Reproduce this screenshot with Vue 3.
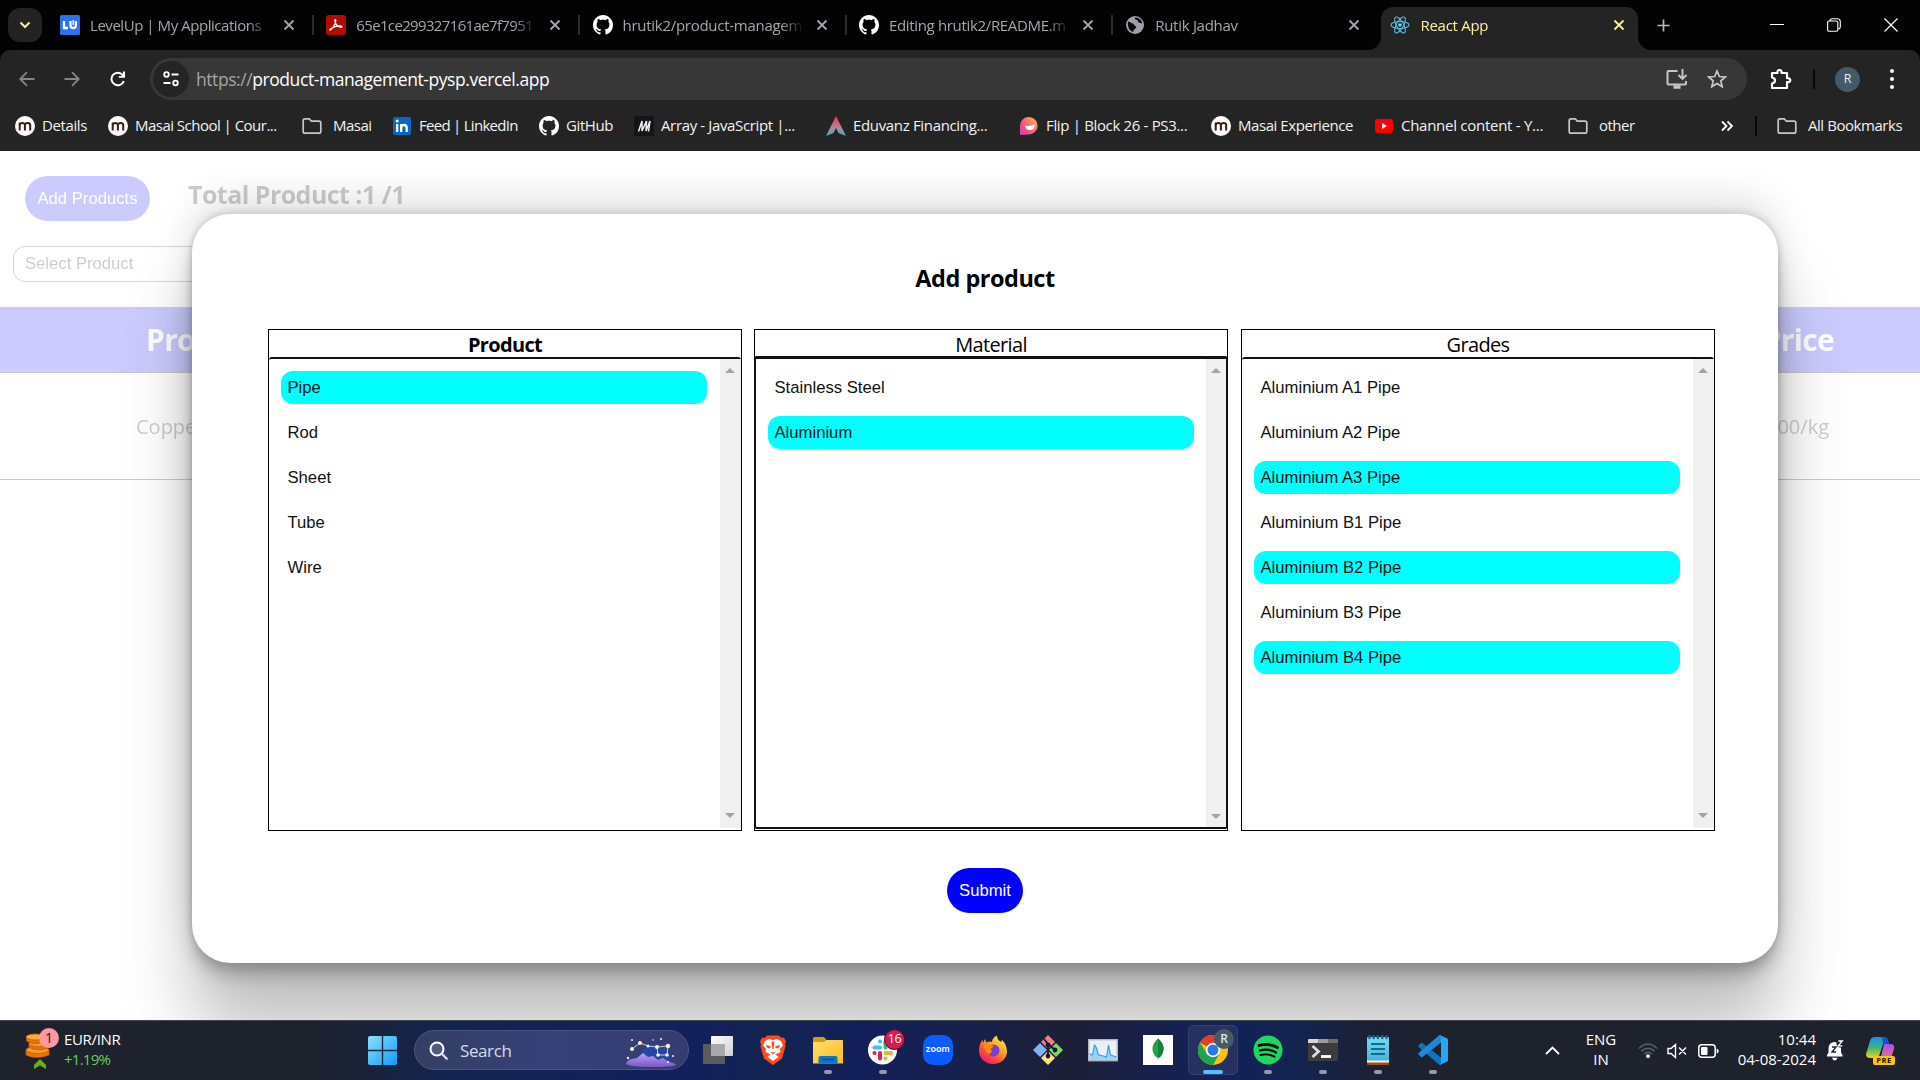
<script setup>
const tabs = [
  { icon: 'levelup', title: 'LevelUp | My Applications', tracking: -0.45 },
  { icon: 'pdf', title: '65e1ce299327161ae7f7951', tracking: -0.65 },
  { icon: 'github', title: 'hrutik2/product-managem', tracking: -0.28 },
  { icon: 'github', title: 'Editing hrutik2/README.m', tracking: -0.33 },
  { icon: 'globe', title: 'Rutik Jadhav', tracking: -0.28 },
]

const bookmarks = [
  { icon: 'masai', label: 'Details', width: 93, tracking: -0.4 },
  { icon: 'masai', label: 'Masai School | Cour...', width: 194, tracking: -0.52 },
  { icon: 'folder', label: 'Masai', width: 90, tracking: -0.5 },
  { icon: 'linkedin', label: 'Feed | LinkedIn', width: 147, tracking: -0.72 },
  { icon: 'github', label: 'GitHub', width: 95, tracking: -0.4 },
  { icon: 'mirror', label: 'Array - JavaScript |...', width: 192, tracking: -0.36 },
  { icon: 'eduvanz', label: 'Eduvanz Financing...', width: 193, tracking: -0.34 },
  { icon: 'flip', label: 'Flip | Block 26 - PS3...', width: 192, tracking: -0.34 },
  { icon: 'masai', label: 'Masai Experience', width: 163, tracking: -0.44 },
  { icon: 'youtube', label: 'Channel content - Y...', width: 194, tracking: -0.27 },
  { icon: 'folder', label: 'other', width: 90, tracking: -0.5 },
]

const columns = [
  {
    title: 'Product',
    bold: true,
    options: ['Pipe', 'Rod', 'Sheet', 'Tube', 'Wire'],
    selected: ['Pipe'],
  },
  {
    title: 'Material',
    focused: true,
    options: ['Stainless Steel', 'Aluminium'],
    selected: ['Aluminium'],
  },
  {
    title: 'Grades',
    options: [
      'Aluminium A1 Pipe',
      'Aluminium A2 Pipe',
      'Aluminium A3 Pipe',
      'Aluminium B1 Pipe',
      'Aluminium B2 Pipe',
      'Aluminium B3 Pipe',
      'Aluminium B4 Pipe',
    ],
    selected: ['Aluminium A3 Pipe', 'Aluminium B2 Pipe', 'Aluminium B4 Pipe'],
  },
]
</script>

<template>
  <div class="screen">
    <svg class="defs" width="0" height="0">
      <symbol id="i-levelup" viewBox="0 0 20 20">
        <rect width="20" height="20" rx="1.500" fill="#2b72f0" />
        <path d="M4 6v7h4M10.500 6v4.500q0 2.500 2.700 2.500t2.700-2.500V6" fill="none" stroke="#fff" stroke-width="2.300" />
        <path d="M13.200 5v5" stroke="#fff" stroke-width="1.300" />
      </symbol>
      <symbol id="i-pdf" viewBox="0 0 20 20">
        <rect width="20" height="20" rx="3" fill="#b30b00" />
        <path d="M4.200 15.200c2-1 5.400-6.200 5.600-9.600 0-1.700-1.300-1.300-.9.500.7 3 3.300 5.600 5.700 6.200 1.900.3 1.500-1.400-.4-1.400-2.700 0-6.200.9-8.600 2.300-1.500.9-2.200 1.800-1.400 2z" fill="none" stroke="#fff" stroke-width="1.200" />
      </symbol>
      <symbol id="i-github" viewBox="0 0 16 16">
        <path fill="#fff" d="M8 0C3.580 0 0 3.580 0 8c0 3.540 2.290 6.530 5.470 7.590.4.070.55-.17.55-.38 0-.19-.01-.82-.01-1.490-2.010.37-2.530-.49-2.690-.94-.09-.23-.48-.94-.82-1.130-.28-.15-.68-.52-.01-.53.63-.01 1.080.58 1.230.82.72 1.210 1.870.87 2.330.66.070-.52.28-.87.510-1.070-1.780-.2-3.640-.89-3.640-3.950 0-.87.310-1.590.82-2.150-.08-.2-.36-1.020.08-2.120 0 0 .67-.21 2.200.82.64-.18 1.320-.27 2-.27s1.360.09 2 .27c1.530-1.040 2.200-.82 2.200-.82.44 1.100.16 1.920.08 2.120.510.56.82 1.270.82 2.150 0 3.070-1.870 3.750-3.650 3.950.29.25.54.73.54 1.480 0 1.070-.01 1.930-.01 2.200 0 .21.150.46.550.38A8.010 8.010 0 0 0 16 8c0-4.420-3.580-8-8-8z" />
      </symbol>
      <symbol id="i-globe" viewBox="0 0 20 20">
        <circle cx="10" cy="10" r="9" fill="#9aa0a6" />
        <path d="M3 6.500c2 .2 2.500 1.500 4.200 1.700 2 .3 1.300 2 3 2.800 1.800.7.800 2.700-.8 3.200-1 .4-.6 2.800-1.900 2.600C4.500 15.500 2.300 12 3 6.500zM10 2.600c-.6 1.800.8 2.400 2.200 2.300 1 .2.300 2 1.600 2.700 1 .7 2.500.2 3.300 1.500C17 5.500 14.500 2.800 10 2.600z" fill="#0a0a0a" />
      </symbol>
      <symbol id="i-react" viewBox="0 0 20 20">
        <g fill="none" stroke="#53c1de" stroke-width="1.100">
          <ellipse cx="10" cy="10" rx="9" ry="3.500" />
          <ellipse cx="10" cy="10" rx="9" ry="3.500" transform="rotate(60 10 10)" />
          <ellipse cx="10" cy="10" rx="9" ry="3.500" transform="rotate(120 10 10)" />
        </g>
        <circle cx="10" cy="10" r="1.800" fill="#61dafb" />
      </symbol>
      <symbol id="i-masai" viewBox="0 0 20 20">
        <circle cx="10" cy="10" r="10" fill="#fff" />
        <path d="M4.700 14.500V6.500M4.700 9q.4-2 2.600-2t2.600 2v5.500M9.900 9q.4-2 2.700-2t2.600 2v5.500" fill="none" stroke="#3a1b16" stroke-width="2" />
      </symbol>
      <symbol id="i-folder" viewBox="0 0 20 20">
        <path d="M1.200 15.500V4.500q0-1.700 1.600-1.700h4.500l2 2.400h7.800q1.700 0 1.700 1.700v8.600q0 1.700-1.700 1.700H2.800q-1.600 0-1.600-1.700z" fill="none" stroke="#c7c7c7" stroke-width="1.700" />
      </symbol>
      <symbol id="i-linkedin" viewBox="0 0 20 20">
        <rect x="1" y="1" width="18" height="18" rx="1.500" fill="#0a66c2" />
        <path d="M5.200 8v8M9.200 16V8M9.200 11.500q.3-2.500 2.800-2.500 2.700 0 2.700 3v4" fill="none" stroke="#fff" stroke-width="2.300" />
        <circle cx="5.200" cy="5" r="1.500" fill="#fff" />
      </symbol>
      <symbol id="i-mirror" viewBox="0 0 20 20">
        <rect width="20" height="20" fill="#15141a" />
        <path d="M4.500 15.500L8 5v10L12.500 5l-.5 10L16 5l-1.500 10.500" fill="none" stroke="#eee" stroke-width="1.500" />
      </symbol>
      <symbol id="i-eduvanz" viewBox="0 0 20 20">
        <linearGradient id="g-edu" x2="0" y2="1"><stop offset=".1" stop-color="#ef3e5c" /><stop offset=".6" stop-color="#a78a9c" /><stop offset="1" stop-color="#3fb0bd" /></linearGradient>
        <path d="M10 0l10 20-7.500-3L10 12l-2.500 5L0 20z" fill="url(#g-edu)" />
      </symbol>
      <symbol id="i-flip" viewBox="0 0 20 20">
        <linearGradient id="g-flip" x1="1" y1="0" x2="0" y2="1"><stop offset=".2" stop-color="#ff9a62" /><stop offset=".6" stop-color="#f5577f" /><stop offset="1" stop-color="#ca3fb4" /></linearGradient>
        <path d="M1 19V9.500a8.800 8.800 0 1 1 9 9z" fill="url(#g-flip)" />
        <path d="M6 9.500c3 1 6 .5 9.500-1.500.5 4-1.500 6-4.500 6s-4.700-2-5-4.500z" fill="#fff" />
      </symbol>
      <symbol id="i-youtube" viewBox="0 0 20 20">
        <rect x="1" y="3" width="18" height="14" rx="3" fill="#f00" />
        <path d="M8 7l5 3-5 3z" fill="#fff" />
      </symbol>
      <symbol id="i-x" viewBox="0 0 12 12">
        <path d="M1.500 1.500l9 9M10.500 1.500l-9 9" stroke="currentColor" stroke-width="1.800" />
      </symbol>
    </svg>

    <!-- Tab strip -->
    <div class="tabstrip">
      <div class="tab-search">
        <svg width="12" height="8" viewBox="0 0 12 8"><path d="M1.500 1.500L6 6l4.500-4.500" fill="none" stroke="#fbf29b" stroke-width="2" /></svg>
      </div>
      <div v-for="(tab, i) in tabs" :key="i" class="tab">
        <svg class="fav"><use :href="'#i-' + tab.icon" /></svg>
        <span class="tab-title" :style="{ letterSpacing: tab.tracking + 'px' }">{{ tab.title }}</span>
        <svg class="tab-x"><use href="#i-x" /></svg>
        <i v-if="i < 4" class="tab-sep"></i>
      </div>
      <div class="tab active">
        <svg class="fav"><use href="#i-react" /></svg>
        <span class="tab-title">React App</span>
        <svg class="tab-x"><use href="#i-x" /></svg>
      </div>
      <svg class="plus" viewBox="0 0 14 14"><path d="M7 .5v13M.5 7h13" stroke="#b6b9bd" stroke-width="1.800" /></svg>
      <div class="win">
        <svg width="14" height="14" viewBox="0 0 14 14"><path d="M0 6.500h14" stroke="#fff" stroke-width="1" /></svg>
        <svg width="14" height="14" viewBox="0 0 14 14" fill="none" stroke="#fff" stroke-width="1.100"><rect x=".6" y="3" width="10.200" height="10.200" rx="1.500" /><path d="M3 3q0-2.300 2.300-2.300h5q3 0 3 3v5q0 2-2.300 2.300" /></svg>
        <svg width="14" height="14" viewBox="0 0 14 14"><path d="M.5.5l13 13M13.500.5l-13 13" stroke="#fff" stroke-width="1.200" /></svg>
      </div>
    </div>

    <!-- Address bar -->
    <div class="toolbar-wrap">
      <div class="toolbar">
        <svg class="nav" viewBox="0 0 16 16"><path d="M15.500 8H1.500M8 1.200L1.200 8 8 14.800" fill="none" stroke="#858585" stroke-width="1.800" /></svg>
        <svg class="nav" viewBox="0 0 16 16"><path d="M.5 8h14M8 1.200L14.800 8 8 14.800" fill="none" stroke="#858585" stroke-width="1.800" /></svg>
        <svg class="nav reload" viewBox="0 0 16 16"><path d="M13.800 10A6.300 6.300 0 1 1 12.700 4l1.300 1.500" fill="none" stroke="#fff" stroke-width="2" /><path d="M15 .5v6.300H8.800V5H13V.5z" fill="#fff" /></svg>
        <div class="omnibox">
          <div class="site-info">
            <svg width="16" height="16" viewBox="0 0 16 16" fill="none" stroke="#fff" stroke-width="1.800"><circle cx="3.500" cy="3.500" r="2.300" /><path d="M8.500 3.500H15.500M.5 12h7" /><circle cx="12.500" cy="12" r="2.300" /></svg>
          </div>
          <span class="url"><span class="scheme">https://</span>product-management-pysp.vercel.app</span>
          <svg class="install" viewBox="0 0 22 20" fill="none" stroke="#c7c7c7" stroke-width="2"><path d="M11.500 2H2.500Q1.500 2 1.500 3v11.500q0 1 1 1H19q1 0 1-1V12" /><path d="M16.500 0v9M12.500 6l4 4 4-4" stroke-width="1.900" /><path d="M7.500 18h7" stroke-width="3.500" /></svg>
          <svg class="star" viewBox="0 0 20 20"><path d="M10 2l2.350 5.500 5.950.5-4.500 3.900 1.400 5.850L10 14.600l-5.200 3.150 1.400-5.850L1.700 8l5.950-.5z" fill="none" stroke="#c7c7c7" stroke-width="1.700" /></svg>
        </div>
        <svg class="puzzle" viewBox="0 0 22 22"><path d="M2 5h5.500q-.4-3 2-3t2 3H17v5.200q3.300-.2 3.300 2t-3.300 2V20H2v-4.500q3-.5 3-3t-3-3z" fill="none" stroke="#fff" stroke-width="2.200" stroke-linejoin="round" /></svg>
        <i class="vsep"></i>
        <div class="avatar">R</div>
        <svg class="dots" viewBox="0 0 4 22" fill="#fff"><circle cx="2" cy="3" r="2" /><circle cx="2" cy="11" r="2" /><circle cx="2" cy="19" r="2" /></svg>
      </div>
    </div>

    <!-- Bookmarks -->
    <div class="bookmarks">
      <div v-for="(b, i) in bookmarks" :key="i" class="bookmark" :style="{ width: b.width + 'px', letterSpacing: b.tracking + 'px' }">
        <svg class="fav"><use :href="'#i-' + b.icon" /></svg>
        <span :class="{ wide: b.icon === 'folder' }">{{ b.label }}</span>
      </div>
      <svg class="more" viewBox="0 0 12 12"><path d="M1 1.500L5.500 6 1 10.500M6.500 1.500L11 6l-4.500 4.500" fill="none" stroke="#fff" stroke-width="1.800" /></svg>
      <i class="vsep bm-sep"></i>
      <div class="bookmark">
        <svg class="fav"><use href="#i-folder" /></svg>
        <span class="wide">All Bookmarks</span>
      </div>
    </div>

    <!-- Page -->
    <main class="page">
      <div class="backdrop">
        <div class="head">
          <button class="pill add">Add Products</button>
          <h2 class="total">Total Product :1 /1</h2>
        </div>
        <div class="select">Select Product</div>
        <div class="thead"><b>Product</b><b>Price</b></div>
        <div class="trow"><span>Copper</span><span>800/kg</span></div>
      </div>

      <section class="modal">
        <h3>Add product</h3>
        <div class="columns">
          <div v-for="col in columns" :key="col.title" class="column" :class="{ focused: col.focused }">
            <div class="col-title" :class="{ bold: col.bold }">{{ col.title }}</div>
            <div class="list">
              <div class="options">
                <div v-for="o in col.options" :key="o" class="option" :class="{ on: col.selected.includes(o) }">{{ o }}</div>
              </div>
              <div class="scroll"><i class="up"></i><i class="down"></i></div>
            </div>
          </div>
        </div>
        <button class="pill submit">Submit</button>
      </section>
    </main>

    <!-- Taskbar -->
    <footer class="taskbar">
      <div class="widget">
        <div class="coins">
          <svg width="28" height="36" viewBox="0 0 28 36">
            <g stroke="#c75c05" stroke-width=".8"><path d="M1 21v5q10 5 23 0v-5z" fill="#e8750a" /><ellipse cx="12.500" cy="21" rx="11.500" ry="3.500" fill="#f7982a" /><path d="M4 14.500v4q10 4.500 20 0v-4z" fill="#e8750a" /><ellipse cx="14" cy="14.500" rx="10" ry="3.200" fill="#f7982a" /><path d="M1.500 8v4q8 4.500 18 1V8z" fill="#e8750a" /><ellipse cx="10.500" cy="8" rx="9.500" ry="3" fill="#ffac42" /></g>
          </svg>
          <svg class="rise" width="12" height="10" viewBox="0 0 12 10"><path d="M6 0l6 6v4L6 6.500 0 10V6z" fill="#6cb012" /></svg>
          <span class="badge one">1</span>
        </div>
        <div class="rate"><span>EUR/INR</span><span class="gain">+1.19%</span></div>
      </div>
      <svg class="start" viewBox="0 0 30 30">
        <linearGradient id="g-win" x2="1" y2="1"><stop offset="0" stop-color="#8be0ff" /><stop offset="1" stop-color="#0f9cf5" /></linearGradient>
        <path d="M2 0h12.300v14.300H0V2q0-2 2-2zM15.700 0H28q2 0 2 2v12.300H15.700zM0 15.700h14.300V30H2q-2 0-2-2zM15.700 15.700H30V28q0 2-2 2H15.700z" fill="url(#g-win)" />
      </svg>
      <div class="search">
        <svg width="19" height="19" viewBox="0 0 19 19"><circle cx="8" cy="8" r="6.500" fill="#6b7396" fill-opacity=".5" stroke="#fff" stroke-width="2" /><path d="M12.800 12.800l5 5" stroke="#dfe2ee" stroke-width="2.200" stroke-linecap="round" /></svg>
        <span>Search</span>
        <svg class="stars" width="52" height="30" viewBox="0 0 52 30">
          <linearGradient id="g-hill" x2="0" y2="1"><stop offset="0" stop-color="#b9a0ee" /><stop offset="1" stop-color="#7b57c8" /></linearGradient>
          <path d="M8 27L22 8q8-4 20 2l6 12-6 5z" fill="#2346a8" />
          <path d="M1 27q1-4 6-5l5-1 6-5 5 4 5-1 5 4 5-2 6 4q6 1 7 3-4 2-25 2T1 27z" fill="url(#g-hill)" />
          <path d="M7 12l8-6 8 3 9 1 11-1-1 9h-9l-1-8" fill="none" stroke="#d9c8bb" stroke-width="1" />
          <g fill="#fff0c9"><circle cx="7" cy="12" r="2" /><circle cx="15" cy="6" r="2" /><circle cx="23" cy="9" r="1.500" /><circle cx="32" cy="10" r="2" /><circle cx="43" cy="9" r="2.200" /><circle cx="42" cy="18" r="1.800" /><circle cx="33" cy="18" r="1.800" /><circle cx="3" cy="21" r="1.200" /><circle cx="7" cy="3" r="1" /><circle cx="36" cy="2" r="1" /><circle cx="28" cy="3" r=".8" /><circle cx="48" cy="19" r="1" /><circle cx="43" cy="25" r="1" /></g>
        </svg>
      </div>

      <div class="apps">
        <div class="app">
          <svg viewBox="0 0 30 30"><linearGradient id="g-tv" x2="1" y2="1"><stop offset="0" stop-color="#fff" /><stop offset="1" stop-color="#cfcfd3" /></linearGradient><rect x="0" y="9" width="22" height="20" rx="1" fill="#5c5c60" /><rect x="8" y="1" width="22" height="20" rx="1" fill="url(#g-tv)" /><rect x="8" y="9" width="14" height="12" fill="#a9a9ad" /></svg>
        </div>
        <div class="app">
          <svg viewBox="0 0 30 30"><path d="M9 .5h12l2.500 2.500 2.500-.5 2 4-1 3 .5 2-3.500 12L15 30 6 23.500 2.500 11.500 3 9.500 2 6.500l2-4 2.500.5z" fill="#fb4a20" /><path d="M15 5l4-1 4 2 2 4.500-3 3.500.5 3-5 2.500 3 2.500-5.500 4-5.500-4 3-2.500L7.500 17l.5-3-3-3.500L7 6l4-2z" fill="#fff" /><path d="M8.500 10l4.500 1.500-1 2-3.500-1zM21.500 10L17 11.500l1 2 3.500-1zM12 16.500l3 1 3-1-3 3zM13.500 6.500h3L15.500 14h-1z" fill="#fb4a20" /></svg>
        </div>
        <div class="app run">
          <svg viewBox="0 0 30 30"><linearGradient id="g-fold" x2="1" y2="1"><stop offset="0" stop-color="#ffdd70" /><stop offset="1" stop-color="#fbbd1f" /></linearGradient><path d="M0 3.500q0-1.500 1.500-1.500H11l2.500 3V9H0z" fill="#d99a08" /><path d="M0 7h11l2.500-2H29q1 0 1 1v22.500H0z" fill="url(#g-fold)" /><path d="M5.500 28.500V23q0-2 2-2h15q2 0 2 2v5.500z" fill="#0a78c8" /><path d="M9 24.500h12" stroke="#054f8c" stroke-width="1.500" /></svg>
        </div>
        <div class="app run">
          <svg viewBox="0 0 30 30"><circle cx="14.500" cy="15" r="14.500" fill="#fff" /><g stroke-width="4" stroke-linecap="round" fill="none"><path d="M6.500 12.500H12" stroke="#36c5f0" /><path d="M12 6.500v.01" stroke="#36c5f0" /><path d="M17.500 7v5.500" stroke="#2eb67d" /><path d="M22.500 12.500v.01" stroke="#2eb67d" /><path d="M12 18v5.500" stroke="#e01e5a" /><path d="M6.500 18v.01" stroke="#e01e5a" /><path d="M17.500 18H23" stroke="#ecb22e" /><path d="M17.500 23.500v.01" stroke="#ecb22e" /></g></svg>
          <span class="badge slack">16</span>
        </div>
        <div class="app">
          <div class="zoom">zoom</div>
        </div>
        <div class="app">
          <svg viewBox="0 0 30 30"><linearGradient id="g-ff" x1=".9" y1="0" x2=".2" y2="1"><stop offset="0" stop-color="#fff44f" /><stop offset=".4" stop-color="#ffa620" /><stop offset=".7" stop-color="#ff4a3c" /><stop offset="1" stop-color="#e8157d" /></linearGradient><path d="M15 29C7 29 1 23 1 16 1 10 3 7 4.500 5l.5 3 2-4 1.500 3.500Q12 6 14 7q0-4 5-6.500 0 4 4 6.500l1-2q5 5 5 11.500C29 23.500 23 29 15 29z" fill="url(#g-ff)" /><circle cx="15.500" cy="15.500" r="6" fill="#7542d8" /><path d="M6 9q4-1 6 1l4 1-3 2.500q-1 1.500 1 3l-3 3Q6 17 6 9z" fill="#ff8a16" /></svg>
        </div>
        <div class="app">
          <svg viewBox="0 0 30 30"><path d="M15 0l7 7-7 7-7-7z" fill="#f07e80" /><path d="M7 8l7 7-7 7-7-7z" fill="#80b2f5" /><path d="M23 8l7 7-7 7-7-7z" fill="#82d464" /><path d="M15 16l7 7-7 7-7-7z" fill="#fbe184" /><g stroke="#17183a" stroke-width="1.800" fill="#17183a"><path d="M11 4l4 5v12M15 9l7 6" fill="none" /><circle cx="15" cy="10" r="1.500" /><circle cx="22" cy="15" r="1.500" /><circle cx="15" cy="21" r="1.500" /></g></svg>
        </div>
        <div class="app">
          <svg viewBox="0 0 30 30"><rect x=".7" y="4.700" width="28.600" height="21" fill="#e8f1f8" stroke="#aeb8c2" stroke-width="1.400" /><path d="M1.500 25V18l3 2 2-10 2 3 2 7 5 1 3 1 2-12 2 10 3 1 3 1v3z" fill="#9ed2f5" /><path d="M1.500 19l3 1 2-10 2 3 2 7 5 1 3 1 2-12 2 10 3 1 3 1" fill="none" stroke="#3a9be0" stroke-width="1.200" /></svg>
        </div>
        <div class="app">
          <svg viewBox="0 0 30 30"><rect width="30" height="30" fill="#fff" /><path d="M15 3.500q6 5 5.500 11T15 23.500Q10 20 9.500 14.500T15 3.500z" fill="#1fa34a" /><path d="M15 3.500q6 5 5.500 11T15 23.500z" fill="#12833a" /><path d="M15 22v3" stroke="#b5c4b0" stroke-width="1" /></svg>
        </div>
        <div class="app current">
          <svg viewBox="0 0 30 30"><circle cx="15" cy="15" r="15" fill="#fbc116" /><path d="M15 15L2 7.500A15 15 0 0 1 28 7.500L15 8z" fill="#e33b2e" /><path d="M2 7.500A15 15 0 0 0 15 30l6.500-11.300L15 22 8.900 18.700z" fill="#22a352" /><circle cx="15" cy="15" r="7.200" fill="#fff" /><circle cx="15" cy="15" r="5.500" fill="#2a78ee" /></svg>
          <span class="badge profile">R</span>
        </div>
        <div class="app run">
          <svg viewBox="0 0 30 30"><circle cx="15" cy="15" r="14.500" fill="#1ed760" /><g fill="none" stroke="#000" stroke-linecap="round"><path d="M6 10.500q9.500-2.800 18.500 2" stroke-width="2.800" /><path d="M7 15.500q8.500-2.300 16 2" stroke-width="2.300" /><path d="M7.500 20q7.500-1.800 14 1.700" stroke-width="1.900" /></g></svg>
        </div>
        <div class="app run">
          <svg viewBox="0 0 30 30"><rect y="4" width="30" height="22" rx="1" fill="#3c3c3e" /><path d="M0 8V5q0-1 1-1h9v4z" fill="#d6d6d6" /><path d="M10 4h10v4H10z" fill="#9c9c9c" /><path d="M20 4h9q1 0 1 1v3H20z" fill="#6e6e6e" /><path d="M4.500 11l6 5.500-6 5.500" fill="none" stroke="#dedede" stroke-width="2.800" /><path d="M13 21.500h10" stroke="#fff" stroke-width="2.800" /></svg>
        </div>
        <div class="app run">
          <svg viewBox="0 0 30 30"><linearGradient id="g-note" x2="0" y2="1"><stop offset="0" stop-color="#7adcf2" /><stop offset="1" stop-color="#46b3d6" /></linearGradient><rect x="4" y="25" width="22" height="5" rx="1" fill="#a84b12" /><rect x="4" y="24" width="22" height="3.500" fill="#f3efe9" /><rect x="4" y="2" width="22" height="23.500" rx="1" fill="url(#g-note)" /><path d="M6.500 1v2M10.700 1v2M15 1v2M19.300 1v2M23.500 1v2" stroke="#0a6a8a" stroke-width="2.400" stroke-linecap="round" /><path d="M8 9h14M8 14h14M8 19h14" stroke="#0a6f92" stroke-width="1.800" /></svg>
        </div>
        <div class="app run">
          <svg viewBox="0 0 30 30"><path d="M.5 10.500L3 8q.7-.4 1.500 0L23 22.500V30h-1.500L.5 12z" fill="#1273b8" /><path d="M.5 19.500L3 22q.7.400 1.500 0L23 7.500V0h-1.500L.5 18z" fill="#1b8ada" /><path d="M21.500 0l7.500 3.300q1 .5 1 1.700v20q0 1.200-1 1.700L21.500 30q1.500-1 1.500-3V3q0-2-1.500-3z" fill="#2aa5f2" /></svg>
        </div>
      </div>

      <div class="tray">
        <svg class="chev" width="15" height="9" viewBox="0 0 15 9"><path d="M1 8l6.500-6.500L14 8" fill="none" stroke="#fff" stroke-width="1.800" /></svg>
        <div class="lang"><span>ENG</span><span>IN</span></div>
        <svg class="wifi" width="20" height="17" viewBox="0 0 20 17" fill="none" stroke="#5c6068" stroke-width="1.500"><path d="M.8 6.500Q10-2.500 19.200 6.500M3.500 9.300q6.500-6 13 0M6.200 12q3.800-3.500 7.600 0" /><circle cx="10" cy="14.200" r="1.900" fill="#fff" stroke="none" /></svg>
        <svg class="spk" width="20" height="16" viewBox="0 0 20 16" fill="none" stroke="#fff" stroke-width="1.400"><path d="M1 5.500h3L8.500 1.500v13L4 10.500H1zM12 4.500l7 7M19 4.500l-7 7" /></svg>
        <svg class="bat" width="21" height="14" viewBox="0 0 21 14"><rect x=".8" y=".8" width="16.400" height="12.400" rx="3" fill="none" stroke="#fff" stroke-width="1.500" /><rect x="3" y="3" width="6.500" height="8" rx="1" fill="#fff" /><path d="M18.700 4.500q2 .5 2 2.500t-2 2.500z" fill="#fff" /></svg>
        <div class="clock"><span>10:44</span><span>04-08-2024</span></div>
        <svg class="bell" width="18" height="21" viewBox="0 0 18 21"><path d="M1 16.500v-1.500l1.500-2.500V8Q3 2 8.500 2q6 0 6.500 6v4.500l1.500 2.500v1.500z" fill="#fff" /><path d="M6 17.800h5.500q-.8 2.700-2.700 2.700T6 17.800z" fill="#fff" /><path d="M6 7h4l-4 5h4" fill="none" stroke="#1d222c" stroke-width="1.400" /><circle cx="14.500" cy="3.500" r="4" fill="#1d222c" /><path d="M12.300 1h4l-4 4.800h4" fill="none" stroke="#fff" stroke-width="1.300" /></svg>
        <div class="copilot">
          <svg width="30" height="28" viewBox="0 0 30 28"><linearGradient id="g-ca" x2="0" y2="1"><stop offset="0" stop-color="#1a8fe8" /><stop offset=".5" stop-color="#38b77c" /><stop offset="1" stop-color="#f5cf1d" /></linearGradient><linearGradient id="g-cb" x2="0" y2="1"><stop offset="0" stop-color="#a64df0" /><stop offset="1" stop-color="#ff7d6b" /></linearGradient><path d="M9 0h9q3 0 4 4l1 3h-6l-4 12q-1 2-3 2H4q-4 0-4-4L4 4q1-4 5-4z" fill="url(#g-ca)" /><path d="M16 0h2q3 0 4 4l1 3h-6z" fill="#1c4fd0" /><path d="M18 7h7q4 0 3 5l-3 9q-1 4-5 4h-8q2-1 3-5z" fill="url(#g-cb)" /></svg>
          <span class="pre">PRE</span>
        </div>
      </div>
    </footer>
  </div>
</template>

<style>
body {
  margin: 0;
  overflow: hidden;
}
</style>

<style scoped>
.screen {
  width: 1920px;
  height: 1080px;
  display: flex;
  flex-direction: column;
  overflow: hidden;
  font-family: 'Open Sans', 'Noto Sans', sans-serif;
  background: #fff;
}
.defs {
  position: absolute;
}
.screen svg {
  display: block;
  flex: none;
}
.fav {
  width: 20px;
  height: 20px;
}

/* tab strip */
.tabstrip {
  height: 50px;
  flex: none;
  background: #030303;
  display: flex;
  align-items: center;
}
.tab-search {
  width: 34px;
  height: 34px;
  margin: 0 17px 0 8px;
  border-radius: 12px;
  background: #232323;
  display: flex;
  align-items: center;
  justify-content: center;
}
.tab {
  position: relative;
  width: 266.300px;
  height: 50px;
  box-sizing: border-box;
  padding-left: 1px;
  display: flex;
  align-items: center;
  color: #a3a6aa;
  flex: none;
}
.tab-title {
  width: 182px;
  margin-left: 10px;
  font-size: 15px;
  letter-spacing: -0.280px;
  white-space: nowrap;
  mask-image: linear-gradient(90deg, #000 158px, transparent 181px);
}
.tab-x {
  width: 12px;
  height: 12px;
  margin-left: 11px;
}
.tab-sep {
  position: absolute;
  left: 253px;
  top: 15px;
  width: 2px;
  height: 20px;
  background: #2c2c2c;
}
.tab.active {
  width: 257px;
  height: 43px;
  margin: 7px 0 0 -9px;
  padding-left: 9px;
  padding-bottom: 7px;
  background: #242424;
  border-radius: 12px 12px 0 0;
  color: #fbf29b;
}
.tab.active::before,
.tab.active::after {
  content: '';
  position: absolute;
  bottom: 0;
  width: 14px;
  height: 14px;
}
.tab.active::before {
  left: -14px;
  background: radial-gradient(circle at 0 0, transparent 14px, #242424 14.500px);
}
.tab.active::after {
  right: -14px;
  background: radial-gradient(circle at 100% 0, transparent 14px, #242424 14.500px);
}
.plus {
  width: 13px;
  height: 13px;
  margin-left: 19px;
}
.win {
  margin-left: auto;
  margin-right: 22px;
  display: flex;
  gap: 43px;
}

/* toolbar */
.toolbar-wrap {
  flex: none;
  background: #030303;
}
.toolbar {
  height: 58px;
  background: #242424;
  border-radius: 10px 10px 0 0;
  display: flex;
  align-items: center;
  padding-left: 19px;
}
.nav {
  width: 16px;
  height: 16px;
  margin-right: 29px;
}
.nav.reload {
  margin-left: 1px;
  margin-right: 28px;
}
.omnibox {
  width: 1597px;
  height: 42px;
  box-sizing: border-box;
  margin-left: -4px;
  padding-left: 3px;
  border-radius: 21px;
  background: #373737;
  display: flex;
  align-items: center;
}
.site-info {
  width: 36px;
  height: 36px;
  border-radius: 50%;
  background: #242424;
  display: flex;
  align-items: center;
  justify-content: center;
}
.url {
  margin-left: 7px;
  font-size: 17.500px;
  letter-spacing: -0.430px;
  color: #fff;
  flex: 1;
  white-space: nowrap;
}
.scheme {
  color: #a5a5a5;
}
.install {
  width: 22px;
  height: 20px;
  margin-right: 19px;
}
.star {
  width: 20px;
  height: 20px;
  margin-right: 20px;
}
.puzzle {
  width: 22px;
  height: 22px;
  margin-left: 23px;
}
.vsep {
  width: 2px;
  height: 20px;
  margin-left: 21px;
  background: #080808;
}
.avatar {
  width: 25px;
  height: 25px;
  margin-left: 20px;
  border-radius: 50%;
  background: #455a68;
  color: #e8eef2;
  font: 12.500px/24px 'Open Sans', sans-serif;
  text-align: center;
}
.dots {
  width: 4px;
  height: 22px;
  margin-left: 30px;
}

/* bookmarks */
.bookmarks {
  height: 43px;
  flex: none;
  box-sizing: border-box;
  padding: 0 0 7px 15px;
  background: #242424;
  display: flex;
  align-items: center;
  color: #f2f2f2;
  font-size: 15px;
  letter-spacing: -0.450px;
}
.bookmark {
  display: flex;
  align-items: center;
  gap: 7px;
  flex: none;
  white-space: nowrap;
}
.bookmark span {
  line-height: 20px;
  padding-bottom: 2px;
}
.bookmark .wide {
  margin-left: 4px;
}
.more {
  width: 12px;
  height: 12px;
  margin-left: 63px;
}
.bm-sep {
  margin-left: 22px;
  margin-right: 20px;
}

/* page */
.page {
  position: relative;
  height: 869px;
  flex: none;
  overflow: hidden;
  background: #fff;
}
.backdrop {
  opacity: 0.2;
}
.head {
  display: flex;
  padding: 25px 0 0 25px;
}
.pill {
  height: 45px;
  padding: 0 12px;
  border: 0;
  border-radius: 23px;
  background: #00f;
  color: #fff;
  font: 16.670px 'Liberation Sans', Arial, sans-serif;
}
.add {
  width: 125px;
}
.total {
  margin: 0 0 0 38px;
  font-size: 25px;
  line-height: 37px;
  letter-spacing: -0.550px;
}
.select {
  width: 400px;
  height: 36px;
  box-sizing: border-box;
  margin: 25px 0 0 13px;
  padding-left: 11px;
  border: 1px solid #333;
  border-radius: 12px;
  font: 16.670px/34px 'Liberation Sans', Arial, sans-serif;
}
.thead {
  height: 66px;
  box-sizing: border-box;
  margin-top: 25px;
  padding: 0 86px 1px 146px;
  background: #00f;
  border-bottom: 1px solid #000;
  color: #fff;
  display: flex;
  align-items: center;
  justify-content: space-between;
  font-size: 30px;
  letter-spacing: -0.700px;
}
.trow {
  height: 107px;
  box-sizing: border-box;
  padding: 0 91px 0 136px;
  border-bottom: 1px solid #000;
  display: flex;
  align-items: center;
  justify-content: space-between;
  font-size: 20px;
}

/* modal */
.modal {
  position: absolute;
  left: 192px;
  top: 63px;
  width: 1586px;
  height: 749px;
  box-sizing: border-box;
  padding: 46px 62px 0 76px;
  border-radius: 38px;
  background: #fff;
  box-shadow:
    rgba(0, 0, 0, 0.25) 0 67px 69px,
    rgba(0, 0, 0, 0.12) 0 -15px 38px,
    rgba(0, 0, 0, 0.12) 0 5px 8px,
    rgba(0, 0, 0, 0.17) 0 15px 16px,
    rgba(0, 0, 0, 0.09) 0 -4px 6px;
  display: flex;
  flex-direction: column;
}
.modal h3 {
  margin: 0;
  padding-right: 14px;
  text-align: center;
  font-size: 23.500px;
  line-height: 37px;
  letter-spacing: -0.500px;
}
.columns {
  display: flex;
  gap: 12px;
  margin-top: 32px;
}
.column {
  width: 474px;
  height: 502px;
  box-sizing: border-box;
  border: 1px solid #000;
  background: #fff;
  display: flex;
  flex-direction: column;
  flex: none;
}
.column:last-child {
  margin-left: 1px;
}
.col-title {
  height: 27px;
  line-height: 30px;
  text-align: center;
  font-size: 20px;
  letter-spacing: -0.650px;
}
.col-title.bold {
  font-weight: 700;
}
.list {
  height: 471px;
  box-sizing: border-box;
  border-top: 2px solid #111;
  border-radius: 3px 3px 0 0;
  display: flex;
}
.focused .list {
  position: relative;
  height: 473px;
  margin: -1px -1px 0;
  border: 2px solid #111;
  border-top-width: 3px;
  border-radius: 3px;
  background: #fff;
}
.options {
  flex: 1;
  padding: 12px 13px 12px 12px;
}
.focused .options {
  padding-right: 12px;
}
.option {
  height: 33px;
  margin-bottom: 12px;
  padding-left: 6.500px;
  border-radius: 12px;
  color: #111;
  font: 16.670px/34px 'Liberation Sans', Arial, sans-serif;
}
.option.on {
  background: #0ff;
}
.scroll {
  width: 21px;
  box-sizing: border-box;
  padding: 9px 1px 10px 0;
  background: #f0f0f0;
  display: flex;
  flex-direction: column;
  align-items: center;
  justify-content: space-between;
}
.focused .scroll {
  width: 20px;
  padding-bottom: 8px;
}
.up,
.down {
  border: 5px solid transparent;
}
.up {
  border-top: 0;
  border-bottom-color: #a3a3a3;
}
.down {
  border-bottom: 0;
  border-top-color: #a3a3a3;
}
.submit {
  width: 76px;
  margin: 37px 0 0 679px;
}

/* taskbar */
.taskbar {
  height: 60px;
  flex: none;
  box-sizing: border-box;
  border-top: 1px solid #45464c;
  background: linear-gradient(90deg, #1d222c 0, #1d222d 310px, #142450 450px, #12205c 690px, #142450 770px, #131f5a 860px, #17214c 960px, #1c1f36 1070px, #17214c 1150px, #122157 1230px, #132452 1290px, #1b2136 1370px, #1d222c 1450px);
  display: flex;
  align-items: center;
  color: #fff;
  font-size: 15px;
}
.widget {
  display: flex;
  width: 342px;
  padding-left: 25px;
  padding-bottom: 4px;
}
.coins {
  position: relative;
  width: 39px;
  height: 40px;
}
.rise {
  position: absolute;
  left: 9px;
  bottom: 0;
}
.badge {
  position: absolute;
  border-radius: 50%;
  text-align: center;
}
.one {
  left: 14px;
  top: -1px;
  width: 20px;
  height: 20px;
  background: #ff97a0;
  color: #222;
  font-size: 14px;
  line-height: 19px;
}
.rate,
.lang,
.clock {
  display: flex;
  flex-direction: column;
  line-height: 20px;
  white-space: nowrap;
}
.rate {
  letter-spacing: -0.350px;
}
.gain {
  color: #6ccb5f;
  letter-spacing: -0.750px;
}
.start {
  width: 29px;
  height: 29px;
  margin-left: 1px;
  margin-bottom: 1px;
}
.search {
  width: 275px;
  height: 40px;
  box-sizing: border-box;
  margin: 0 0 1px 17px;
  padding: 0 11px 0 14px;
  border: 1px solid #4a5580;
  border-radius: 20px;
  background: linear-gradient(90deg, #333f63, #36417a 50%, #353d70);
  display: flex;
  align-items: center;
  color: #d7dbe8;
  font-size: 17px;
}
.search span {
  margin-left: 12px;
  flex: 1;
  letter-spacing: -0.400px;
}
.stars {
  margin-top: 4px;
}
.apps {
  display: flex;
  margin-left: 1px;
  margin-bottom: 1px;
}
.app {
  position: relative;
  width: 55px;
  height: 58px;
  display: flex;
  align-items: center;
  justify-content: center;
}
.app svg {
  width: 30px;
  height: 30px;
}
.app.run::after,
.app.current::after {
  content: '';
  position: absolute;
  bottom: 5px;
  left: 24px;
  width: 8px;
  height: 4px;
  border-radius: 2px;
  background: #9499ab;
}
.app.current::after {
  left: 18px;
  width: 20px;
  background: #4cc2ff;
}
.app.current::before {
  content: '';
  position: absolute;
  left: 3px;
  top: 4px;
  width: 48px;
  height: 48px;
  border: 1px solid #333f70;
  border-radius: 5px;
  background: #26315f;
}
.app.current svg {
  position: relative;
}
.slack {
  left: 29px;
  top: 8px;
  width: 19px;
  height: 19px;
  background: #d81b52;
  border: 1px solid #3d0f2c;
  font-size: 12.500px;
  line-height: 18px;
  letter-spacing: -0.500px;
}
.profile {
  left: 29px;
  top: 8px;
  width: 20px;
  height: 20px;
  background: #455a64;
  color: #dfe6ea;
  font-size: 12px;
  font-weight: 600;
  line-height: 20px;
}
.zoom {
  width: 30px;
  height: 30px;
  border-radius: 10px;
  background: #0b5cff;
  font: 600 9px/28px Inter, sans-serif;
  text-align: center;
}
.tray {
  flex: 1;
  display: flex;
  align-items: center;
}
.chev {
  margin-left: 85px;
}
.lang {
  width: 50px;
  margin-left: 16px;
  padding-bottom: 3px;
  text-align: center;
}
.wifi {
  margin-left: 12px;
}
.spk {
  margin-left: 9px;
}
.bat {
  margin-left: 11px;
}
.clock {
  width: 80px;
  margin-left: 17px;
  padding-bottom: 3px;
  align-items: flex-end;
  letter-spacing: 0;
}
.bell {
  margin-left: 10px;
}
.copilot {
  position: relative;
  margin-left: 22px;
}
.pre {
  position: absolute;
  left: 7px;
  top: 19px;
  width: 22px;
  height: 9px;
  border-radius: 2px;
  background: #ffc40c;
  color: #1a1a1a;
  font: 700 7.500px/9px 'Open Sans', sans-serif;
  letter-spacing: 0.500px;
  text-align: center;
}
</style>
